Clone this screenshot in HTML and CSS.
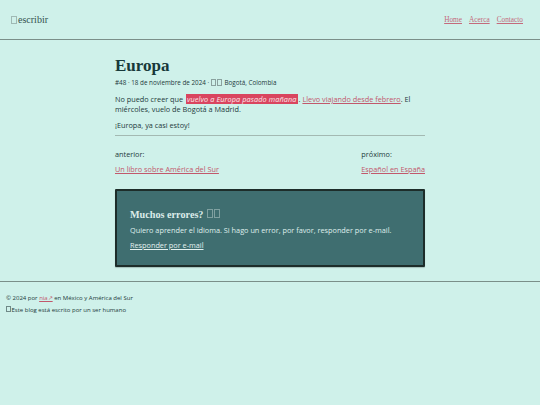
FILE: index.html
```html
<!DOCTYPE html>
<html lang="es">
<head>
<meta charset="utf-8">
<title>Europa · escribir</title>
<link rel="stylesheet" href="styles.css">
</head>
<body>
<header class="site-header">
  <a class="logo" href="#"><span class="tofu"></span>escribir</a>
  <nav class="nav">
    <a href="#">Home</a>
    <a href="#">Acerca</a>
    <a href="#">Contacto</a>
  </nav>
</header>

<main class="post">
  <h1 class="post-title">Europa</h1>
  <p class="meta">#48 · 18 de noviembre de 2024 · <span class="tofu-sm"></span><span class="tofu-sm"></span> Bogotá, Colombia</p>
  <p>No puedo creer que <mark>vuelvo a Europa pasado mañana</mark>. <a href="#">Llevo viajando desde febrero</a>. El miércoles, vuelo de Bogotá a Madrid.</p>
  <p>¡Europa, ya casi estoy!</p>
  <hr class="rule">

  <div class="pager">
    <div>
      <p class="pager-label">anterior:</p>
      <a href="#">Un libro sobre América del Sur</a>
    </div>
    <div class="pager-next">
      <p class="pager-label">próximo:</p>
      <a href="#">Español en España</a>
    </div>
  </div>

  <section class="errors">
    <h2>Muchos errores? <span class="tofu-md"></span><span class="tofu-md"></span></h2>
    <p>Quiero aprender el idioma. Si hago un error, por favor, responder por e-mail.</p>
    <a href="#">Responder por e-mail</a>
  </section>
</main>

<footer class="site-footer">
  <p>© 2024 por <a href="#">nia↗</a> en México y América del Sur</p>
  <p><span class="tofu-xs"></span>Este blog está escrito por un ser humano</p>
</footer>
</body>
</html>
```

FILE: styles.css
```css
html, body {
  margin: 0;
  padding: 0;
}

body {
  background: #cff1ea;
  color: #1d3a3b;
  font-family: "Open Sans", "Noto Sans", sans-serif;
  font-size: 7.3px;
  line-height: 10px;
}

a {
  color: #c2586c;
}

p {
  margin: 0;
}

/* top bar */
.site-header {
  height: 39px;
  display: flex;
  align-items: center;
  justify-content: space-between;
  padding: 0 17px 0 11px;
  border-bottom: 1px solid #7b8f89;
}

.logo {
  font-family: "Liberation Serif", serif;
  font-size: 10px;
  color: #34514f;
  text-decoration: none;
  display: flex;
  align-items: center;
}

.tofu {
  display: inline-block;
  width: 4px;
  height: 6px;
  border: 0.5px solid #9fb9b4;
  margin-right: 1px;
}

.nav {
  display: flex;
  gap: 7px;
  font-family: "Liberation Serif", serif;
  font-size: 7.3px;
}

.nav a {
  color: #c46a7c;
}

/* article */
.post {
  width: 310px;
  margin: 0 auto;
  padding-top: 15px;
}

.post-title {
  font-family: "Liberation Serif", serif;
  font-size: 17px;
  font-weight: bold;
  margin: 0 0 1px;
  color: #17393a;
  line-height: 1.3;
}

.meta {
  font-size: 6.3px;
  margin-bottom: 4px;
}

.post p + p {
  margin-top: 6px;
}

.tofu-sm {
  display: inline-block;
  width: 3.5px;
  height: 5px;
  border: 0.5px solid #8aa19e;
  margin-right: 0.5px;
  vertical-align: -0.5px;
}

mark {
  background: #d9455f;
  color: #fbe9ec;
  font-style: italic;
  padding: 0 1.5px;
  margin: 0 0.5px;
  letter-spacing: 0.1px;
}

.rule {
  border: 0;
  border-top: 1px solid #a3b9b2;
  margin: 5px 0 0;
}

.pager {
  display: flex;
  justify-content: space-between;
  margin-top: 13px;
}

.pager-label {
  margin-bottom: 5px;
}

/* feedback box */
.errors {
  margin-top: 15px;
  background: #3f6e70;
  border: 2px solid #1d2d2a;
  border-radius: 1px;
  padding: 17px 13px 15px;
  color: #dfeeec;
  box-shadow: 0 1px 1px rgba(0,0,0,0.2);
}

.errors h2 {
  font-family: "Liberation Serif", serif;
  font-size: 10.2px;
  font-weight: bold;
  margin: 0 0 4px;
  line-height: 13px;
  color: #dcecea;
}

.tofu-md {
  display: inline-block;
  width: 4px;
  height: 7px;
  border: 0.5px solid #7fa0a0;
  margin-left: 1px;
}

.errors p {
  margin-bottom: 5px;
}

.errors a {
  color: #e3f1ef;
}

/* footer */
.site-footer {
  margin-top: 14px;
  border-top: 1px solid #7b8f89;
  padding: 10px 6px;
  font-size: 6px;
  line-height: 12px;
}

.tofu-xs {
  display: inline-block;
  width: 3px;
  height: 4px;
  border: 0.5px solid #6f8987;
  margin-right: 0.5px;
}
```
